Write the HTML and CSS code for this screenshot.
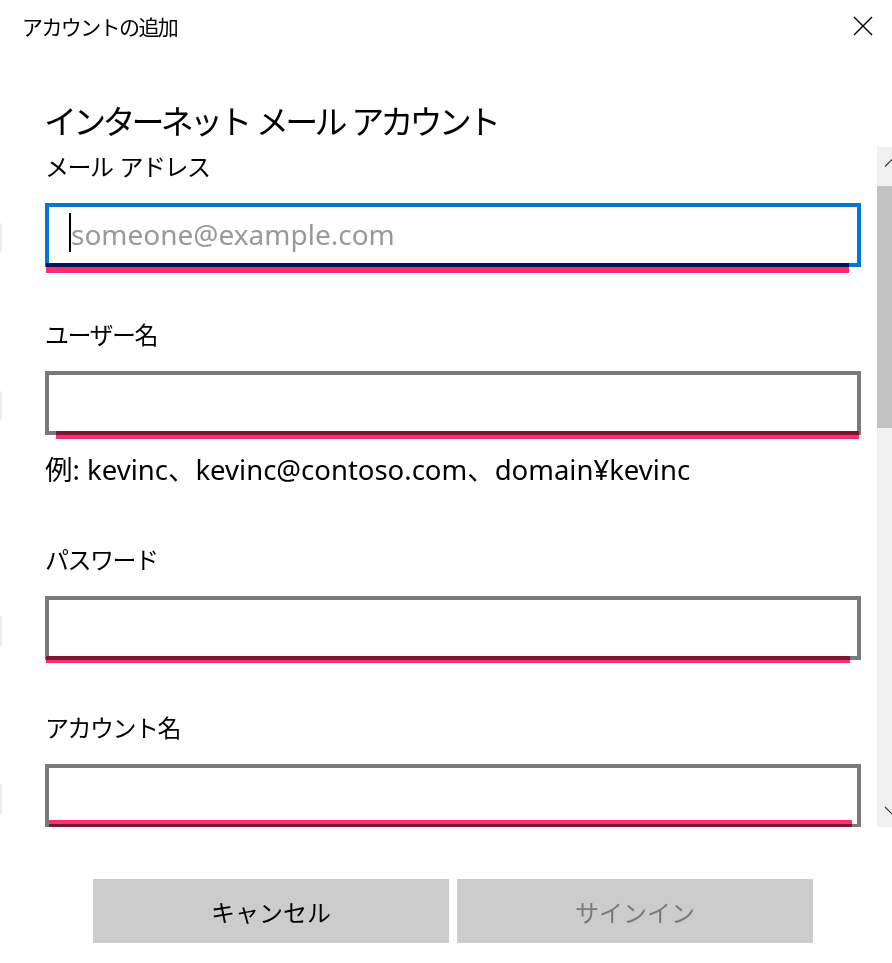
FILE: index.html
```html
<!DOCTYPE html>
<html lang="ja">
<head>
<meta charset="utf-8">
<title>アカウントの追加</title>
<link rel="stylesheet" href="styles.css">
</head>
<body>
<div class="window">
  <header class="titlebar">
    <span class="title">アカウントの追加</span>
    <button class="close" aria-label="閉じる">
      <svg width="20" height="20" viewBox="0 0 20 20"><path d="M1 1 L19 19 M19 1 L1 19" stroke="#000" stroke-width="1.4" fill="none"/></svg>
    </button>
  </header>
  <h1 class="heading">インターネット メール アカウント</h1>
  <div class="scroller">
    <div class="form">
      <div class="field">
        <div class="label">メール アドレス</div>
        <div class="box focused"><span class="caret"></span><span class="placeholder">someone@example.com</span><span class="mark m1"></span></div>
      </div>
      <div class="field">
        <div class="label">ユーザー名</div>
        <div class="box"><span class="mark m2"></span></div>
        <div class="hint">例: kevinc、kevinc@contoso.com、domain¥kevinc</div>
      </div>
      <div class="field">
        <div class="label">パスワード</div>
        <div class="box"><span class="mark m3"></span></div>
      </div>
      <div class="field">
        <div class="label">アカウント名</div>
        <div class="box"><span class="mark m4"></span></div>
      </div>
    </div>
    <div class="scrollbar">
      <div class="sb-up"><svg width="15" height="39" viewBox="0 0 15 39"><polyline points="8,19.5 15,12.5 22,19.5" stroke="#333" stroke-width="1.2" fill="none"/></svg></div>
      <div class="sb-thumb"></div>
      <div class="sb-track"></div>
      <div class="sb-down"><svg width="15" height="39" viewBox="0 0 15 39"><polyline points="8,19 15,26 22,19" stroke="#333" stroke-width="1.2" fill="none"/></svg></div>
    </div>
  </div>
  <footer class="actions">
    <button class="btn">キャンセル</button>
    <button class="btn disabled">サインイン</button>
  </footer>
</div>
</body>
</html>
```
FILE: styles.css
```css
html, body {
  margin: 0;
  padding: 0;
  background: #ffffff;
}
body {
  width: 892px;
  height: 963px;
  overflow: hidden;
  font-family: "Noto Sans CJK JP", sans-serif;
  color: #000;
}
.window {
  width: 892px;
  height: 963px;
}
.titlebar {
  box-sizing: border-box;
  height: 40px;
  padding: 12px 0 0 22px;
  display: flex;
  justify-content: space-between;
  align-items: flex-start;
}
.title {
  font-size: 21px;
  line-height: 28px;
  letter-spacing: -1.6px;
}
.close {
  margin: 4px 19px 0 0;
  width: 20px;
  height: 20px;
  padding: 0;
  border: 0;
  background: none;
  display: block;
}
.close svg { display: block; }
.heading {
  margin: 60px 0 7px 44px;
  font-size: 33px;
  line-height: 40px;
  font-weight: 400;
  letter-spacing: -3.8px;
  word-spacing: 4px;
}
.scroller {
  display: flex;
  height: 680px;
}
.form {
  flex: 1;
  box-sizing: border-box;
  padding: 3px 16px 0 45px;
  overflow: hidden;
}
.field + .field {
  margin-top: 51px;
}
.label {
  font-size: 24px;
  line-height: 32px;
  letter-spacing: -1.5px;
  word-spacing: 3px;
  margin-bottom: 21px;
}
.box {
  position: relative;
  box-sizing: border-box;
  height: 64px;
  border: 4px solid #7a7a7a;
  display: flex;
  align-items: center;
  padding: 0 0 6px 20px;
}
.box::before {
  content: "";
  position: absolute;
  left: -49px;
  top: 16px;
  width: 2px;
  height: 30px;
  background: #ececec;
  border-radius: 0 2px 2px 0;
}
.box.focused {
  border-color: #0078d7;
}
.caret {
  width: 2px;
  height: 39px;
  background: #000;
  flex: none;
}
.placeholder {
  font-family: "Noto Sans", sans-serif;
  font-size: 28px;
  color: #999999;
  margin-top: 4px;
}
.mark {
  position: absolute;
  background: #ff2d6b;
  mix-blend-mode: multiply;
  width: 803px;
}
.m1 { left: -3px; top: 56px; height: 10px; }
.m2 { left: 7px; top: 56px; height: 8px; }
.m3 { left: -3px; top: 56px; height: 7px; width: 804px; }
.m4 { left: 0; top: 52px; height: 8px; }
.hint {
  font-family: "Noto Sans", "Noto Sans CJK JP", sans-serif;
  font-size: 27.5px;
  line-height: 32px;
  margin: 19px 0 57px;
}
.scrollbar {
  width: 15px;
  flex: none;
  background: #f0f0f0;
  display: flex;
  flex-direction: column;
  overflow: hidden;
}
.scrollbar svg { display: block; }
.sb-up, .sb-down { height: 39px; flex: none; }
.sb-thumb {
  height: 242px;
  background: #c2c2c2;
  flex: none;
}
.sb-track { flex: 1; }
.actions {
  display: flex;
  gap: 8px;
  padding: 52px 0 0 93px;
}
.btn {
  width: 356px;
  height: 64px;
  border: 0;
  padding: 0;
  background: #cccccc;
  font-family: "Noto Sans CJK JP", sans-serif;
  font-size: 24px;
  color: #000;
}
.btn.disabled {
  color: #7a7a7a;
}
```
